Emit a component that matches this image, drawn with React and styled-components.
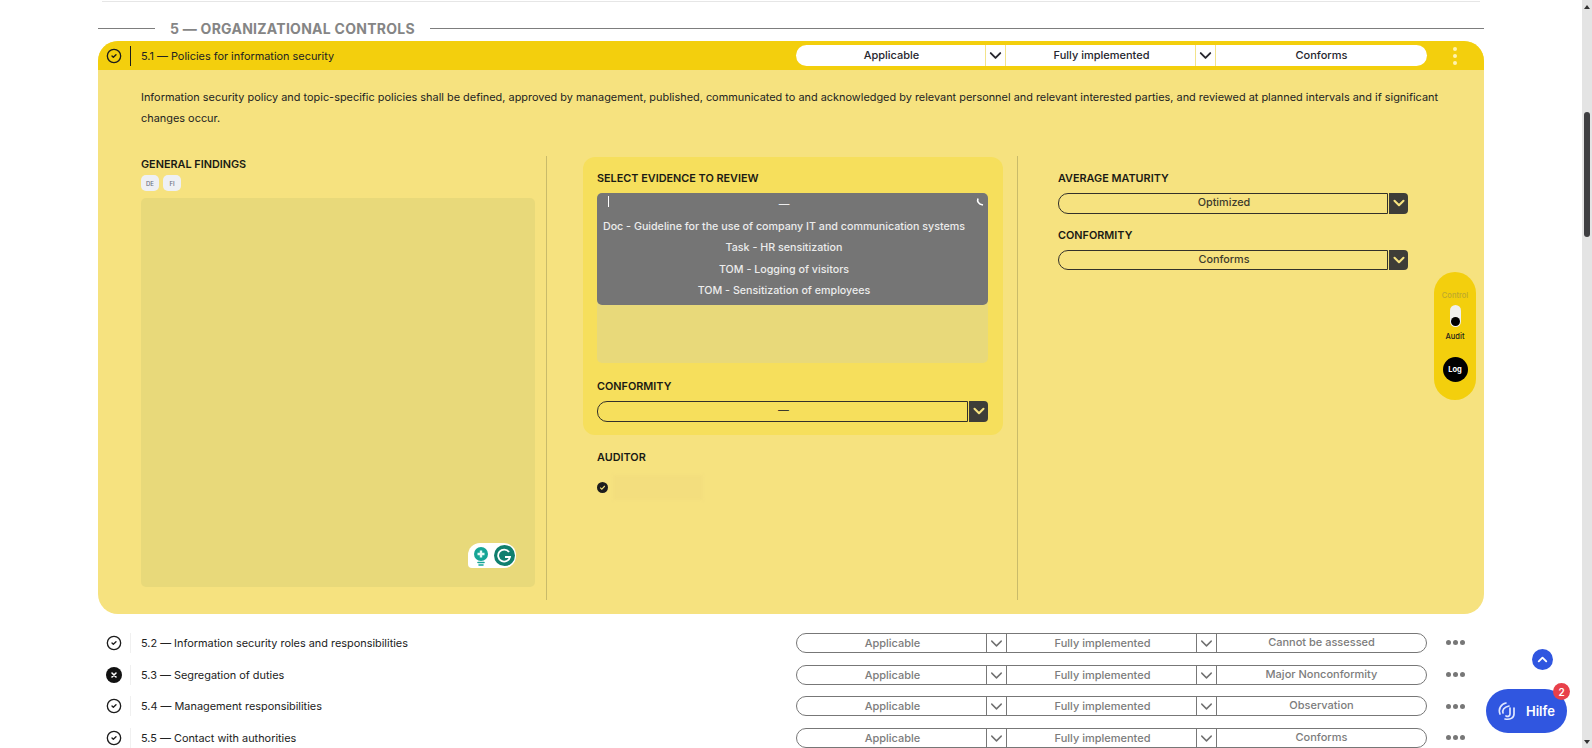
import React from 'react';
import styled, { createGlobalStyle } from 'styled-components';
import { CircleCheck, ChevronDown, ChevronUp } from 'lucide-react';

const GlobalStyle = createGlobalStyle`
  html, body {
    margin: 0;
    padding: 0;
    background: #fff;
    font-family: Inter, "Liberation Sans", sans-serif;
    color: #1c1c1c;
    overflow: hidden;
  }
  * { box-sizing: border-box; }
`;

const Page = styled.div`
  width: 1592px;
  height: 748px;
  display: flex;
  overflow: hidden;
  position: relative;
`;

const Main = styled.main`
  flex: 1;
  min-width: 0;
  padding: 0 98px;
`;

const PrevCardEdge = styled.div`
  height: 2px;
  margin: 0 4px;
  border-bottom: 1px solid #e6e6e6;
`;

const SectionHead = styled.div`
  height: 39px;
  padding-top: 14px;
  display: flex;
  align-items: center;
  gap: 15px;

  &::before, &::after {
    content: '';
    height: 1px;
    background: #7d7d7d;
  }
  &::before { width: 57px; }
  &::after { flex: 1; }
`;

const SectionTitle = styled.h2`
  margin: 0;
  font-size: 14px;
  font-weight: 700;
  color: #858585;
  letter-spacing: 0.26px;
`;

const Card = styled.section`
  background: #f6e27f;
  border-radius: 20px;
  overflow: hidden;
  height: 573px;
`;

const Row = styled.div`
  display: flex;
  align-items: center;
  height: ${props => props.$head ? '29px' : '31.7px'};
  background: ${props => props.$head ? '#f3cf0d' : 'transparent'};
`;

const StatusCell = styled.div`
  width: 33px;
  height: 20px;
  padding-left: 8px;
  display: flex;
  align-items: center;
  border-right: 1px solid ${props => props.$head ? '#1c1c1c' : '#f0f0f0'};
  color: #1c1c1c;
`;

const RowTitle = styled.div`
  flex: 1;
  padding-left: 10px;
  font-size: 10.9px;
  color: #222;
  white-space: nowrap;
`;

const PillGroup = styled.div`
  width: 631px;
  height: ${props => props.$head ? '21px' : '20px'};
  margin-right: -1px;
  display: grid;
  grid-template-columns: 189px 21px 189px 21px 1fr;
  border: ${props => props.$head ? 'none' : '1px solid #777'};
  border-radius: 11px;
  background: #fff;
  font-size: 11px;
  font-weight: 500;
  color: ${props => props.$head ? '#26262e' : '#7c7c7c'};
`;

const PillValue = styled.div`
  display: flex;
  align-items: center;
  justify-content: center;
  padding-left: ${props => props.$last ? '0' : '2px'};
  padding-bottom: ${props => props.$up || 0}px;
`;

const PillArrow = styled.div`
  display: flex;
  align-items: center;
  justify-content: center;
  border-left: 1px solid ${props => props.$head ? '#f3e38a' : '#777'};
  border-right: 1px solid ${props => props.$head ? '#f3e38a' : '#777'};
  color: ${props => props.$head ? '#26262e' : '#6f6f6f'};
`;

const MenuCell = styled.div`
  width: 58px;
  display: flex;
  flex-direction: ${props => props.$head ? 'column' : 'row'};
  align-items: center;
  justify-content: center;
  gap: ${props => props.$head ? '3px' : '2px'};
`;

const MenuDot = styled.span`
  width: ${props => props.$head ? '4px' : '5px'};
  height: ${props => props.$head ? '4px' : '5px'};
  border-radius: 50%;
  background: ${props => props.$head ? '#fff3b0' : '#777'};
`;

const CardBody = styled.div`
  padding: 17px 0 0 43px;
`;

const Description = styled.p`
  margin: 0;
  width: 1310px;
  font-size: 10.92px;
  line-height: 21px;
  color: #222;
`;

const Columns = styled.div`
  margin-top: 27px;
  height: 444px;
  display: grid;
  grid-template-columns: 406px 471px 1fr;
`;

const Column = styled.div`
  padding: ${props => props.$pad || '0'};
  border-right: ${props => props.$divided ? '1px solid #c9bb6a' : 'none'};
  position: relative;
`;

const Label = styled.div`
  height: 16px;
  line-height: 16px;
  font-size: 10.85px;
  font-weight: 600;
  color: #1a1a14;
`;

const PanelLabel = styled(Label)`
  margin-top: 15px;
`;

const SecondLabel = styled(Label)`
  margin-top: 13px;
`;

const LangTags = styled.div`
  display: flex;
  gap: 4px;
  margin-top: 3px;
`;

const LangTag = styled.span`
  width: 18px;
  height: 16px;
  border-radius: 5px;
  background: #eef0f4;
  color: #6d7280;
  font-size: 6px;
  font-weight: 500;
  display: flex;
  align-items: center;
  justify-content: center;
`;

const FindingsBox = styled.div`
  margin-top: 7px;
  width: 394px;
  height: 389px;
  border-radius: 5px;
  background: #e8d97a;
  position: relative;
`;

const GrammarlyBadge = styled.div`
  position: absolute;
  right: 19px;
  bottom: 19px;
  width: 48px;
  height: 25px;
  border-radius: 12px 12px 12px 4px;
  background: #fff;
  display: flex;
  align-items: center;
  justify-content: space-between;
  padding: 0 1px 0 5px;
`;

const EvidencePanel = styled.div`
  background: #f6df5c;
  border-radius: 12px;
  padding: 13px 15px 13px 14px;
  height: 278px;
  margin-top: 1px;
`;

const EvidenceBox = styled.div`
  margin-top: 7px;
  height: 170px;
  border-radius: 5px;
  background: #e8d97a;
`;

const EvidenceList = styled.div`
  height: 112px;
  border-radius: 5px;
  background: #757575;
  padding-right: 17px;
  position: relative;
  color: #ececec;
  font-size: 10.7px;
  font-weight: 500;
`;

const EvidenceOption = styled.div`
  height: ${props => props.$first ? '22.5px' : '21.5px'};
  display: flex;
  align-items: center;
  justify-content: center;
  white-space: nowrap;
`;

const Caret = styled.span`
  position: absolute;
  left: 11px;
  top: 3px;
  width: 1px;
  height: 11px;
  background: #fff;
`;

const CornerMark = styled.svg`
  position: absolute;
  right: 4px;
  top: 5px;
`;

const Select = styled.div`
  margin-top: 7px;
  height: 20.5px;
  display: flex;
  gap: 1px;
`;

const SelectValue = styled.div`
  flex: 1;
  border: 1px solid #33312a;
  border-radius: 10px 0 0 10px;
  padding: 0 0 1px 2px;
  display: flex;
  align-items: center;
  justify-content: center;
  font-size: 10.8px;
  font-weight: 500;
  color: #3c3a2c;
`;

const SelectArrow = styled.div`
  width: 19px;
  border-radius: 0 4px 4px 0;
  background: #3e3d38;
  color: #f6e27f;
  display: flex;
  align-items: center;
  justify-content: center;
`;

const AuditorSection = styled.div`
  margin: 14px 0 0 14px;
`;

const AuditorRow = styled.div`
  margin-top: 10px;
  display: flex;
  align-items: center;
  gap: 5px;
`;

const BlurredName = styled.div`
  width: 90px;
  height: 25px;
  background: #f3de7e;
  filter: blur(1.5px);
`;

const MaturityColumn = styled.div`
  width: 350px;
  display: flex;
  flex-direction: column;
`;

const SideWidget = styled.aside`
  position: absolute;
  left: 1434px;
  top: 272px;
  width: 42px;
  height: 128px;
  border-radius: 21px;
  background: #f3cf0d;
  display: flex;
  flex-direction: column;
  align-items: center;
  padding-top: 19px;
`;

const WidgetText = styled.span`
  font-size: 7.5px;
  line-height: 10px;
  font-weight: 500;
  color: ${props => props.$muted ? '#bda92c' : '#1c1c1c'};
`;

const WidgetToggle = styled.div`
  margin: 4px 0 5px;
  width: 11px;
  height: 22px;
  border-radius: 6px;
  background: #f0f0ee;
  display: flex;
  align-items: flex-end;
  justify-content: center;
  padding-bottom: 1px;

  &::after {
    content: '';
    width: 9px;
    height: 9px;
    border-radius: 50%;
    background: #000;
  }
`;

const LogButton = styled.div`
  margin-top: 15px;
  width: 25px;
  height: 25px;
  border-radius: 50%;
  background: #000;
  color: #fff;
  font-size: 7.5px;
  font-weight: 700;
  display: flex;
  align-items: center;
  justify-content: center;
`;

const ListRows = styled.div`
  margin-top: 13px;
`;

const ScrollUp = styled.button`
  position: absolute;
  left: 1532px;
  top: 649px;
  width: 21px;
  height: 21px;
  padding: 0;
  border: none;
  border-radius: 50%;
  background: #3056e0;
  color: #fff;
  display: flex;
  align-items: center;
  justify-content: center;
`;

const HelpButton = styled.button`
  position: absolute;
  left: 1486px;
  top: 689px;
  width: 81px;
  height: 44px;
  padding: 0 0 0 11px;
  border: none;
  border-radius: 22px;
  background: #3056e0;
  color: #fff;
  font-family: inherit;
  font-size: 13px;
  font-weight: 600;
  display: flex;
  align-items: center;
  gap: 9px;
`;

const HelpBadge = styled.span`
  position: absolute;
  right: -3px;
  top: -6px;
  width: 17px;
  height: 17px;
  border-radius: 50%;
  background: #e8404a;
  color: #fff;
  font-size: 10px;
  font-weight: 600;
  display: flex;
  align-items: center;
  justify-content: center;
`;

const Scrollbar = styled.div`
  width: 10px;
  height: 100%;
  background: #e4e4e4;
  display: flex;
  flex-direction: column;
  align-items: center;
  justify-content: space-between;
  padding: 5px 0 4px;
  position: relative;
`;

const ScrollArrow = styled.span`
  width: 0;
  height: 0;
  border-left: 3.5px solid transparent;
  border-right: 3.5px solid transparent;
  ${props => props.$down
    ? 'border-top: 4px solid #333;'
    : 'border-bottom: 4px solid #333;'}
`;

const ScrollThumb = styled.span`
  position: absolute;
  left: 2px;
  top: 112px;
  width: 6px;
  height: 125px;
  border-radius: 3px;
  background: #3f3f42;
`;

const rows = [
  { title: '5.2 — Information security roles and responsibilities', result: 'Cannot be assessed' },
  { title: '5.3 — Segregation of duties', result: 'Major Nonconformity', failed: true },
  { title: '5.4 — Management responsibilities', result: 'Observation' },
  { title: '5.5 — Contact with authorities', result: 'Conforms' },
];

const evidence = [
  'Doc - Guideline for the use of company IT and communication systems',
  'Task - HR sensitization',
  'TOM - Logging of visitors',
  'TOM - Sensitization of employees',
];

function FailedIcon() {
  return (
    <svg width="16" height="16" viewBox="0 0 16 16">
      <circle cx="8" cy="8" r="8" fill="#111" />
      <path d="M6 6l4 4M10 6l-4 4" stroke="#fff" strokeWidth="1.6" strokeLinecap="round" />
    </svg>
  );
}

function ControlPills({ head, result }) {
  return (
    <PillGroup $head={head}>
      <PillValue $up={1}>Applicable</PillValue>
      <PillArrow $head={head}><ChevronDown size={19} strokeWidth={head ? 2.4 : 1.8} /></PillArrow>
      <PillValue $up={1}>Fully implemented</PillValue>
      <PillArrow $head={head}><ChevronDown size={19} strokeWidth={head ? 2.4 : 1.8} /></PillArrow>
      <PillValue $last $up={head ? 1 : 3}>{result}</PillValue>
    </PillGroup>
  );
}

function DarkSelect({ value }) {
  return (
    <Select>
      <SelectValue>{value}</SelectValue>
      <SelectArrow><ChevronDown size={18} strokeWidth={2.8} /></SelectArrow>
    </Select>
  );
}

function GrammarlyIcons() {
  return (
    <GrammarlyBadge>
      <svg width="16" height="20" viewBox="0 0 16 20">
        <circle cx="8" cy="8" r="7" fill="#15a596" />
        <path d="M8 4.5v7M4.5 8h7" stroke="#e8fbf7" strokeWidth="2.4" />
        <path d="M5 16.5h6M6 19h4" stroke="#15a596" strokeWidth="1.6" strokeLinecap="round" />
      </svg>
      <svg width="21" height="21" viewBox="0 0 21 21">
        <circle cx="10.5" cy="10.5" r="10.5" fill="#0f7f6e" />
        <path d="M15 7a6 6 0 1 0 1 5h-5" fill="none" stroke="#fff" strokeWidth="1.8" />
      </svg>
    </GrammarlyBadge>
  );
}

function HelpLogo() {
  return (
    <svg width="20" height="20" viewBox="0 0 20 20" fill="none" stroke="#dfe6ff" strokeWidth="1.7" strokeLinecap="round">
      <path d="M3 13C1 8 4 3 9 2" />
      <path d="M6 12c-1-3 1-6 6-7" />
      <path d="M13 7v6c0 2-2 3-4 2" />
      <path d="M17 7v6c0 4-4 6-9 5" />
    </svg>
  );
}

export default function App() {
  return (
    <>
      <GlobalStyle />
      <Page>
        <Main>
          <PrevCardEdge />
          <SectionHead>
            <SectionTitle>5 — ORGANIZATIONAL CONTROLS</SectionTitle>
          </SectionHead>

          <Card>
            <Row $head>
              <StatusCell $head><CircleCheck size={16} strokeWidth={2} /></StatusCell>
              <RowTitle>5.1 — Policies for information security</RowTitle>
              <ControlPills head result="Conforms" />
              <MenuCell $head><MenuDot $head /><MenuDot $head /><MenuDot $head /></MenuCell>
            </Row>
            <CardBody>
              <Description>
                Information security policy and topic-specific policies shall be defined, approved by management, published, communicated to and acknowledged by relevant personnel and relevant interested parties, and reviewed at planned intervals and if significant changes occur.
              </Description>
              <Columns>
                <Column $divided>
                  <Label>GENERAL FINDINGS</Label>
                  <LangTags>
                    <LangTag>DE</LangTag>
                    <LangTag>FI</LangTag>
                  </LangTags>
                  <FindingsBox>
                    <GrammarlyIcons />
                  </FindingsBox>
                </Column>

                <Column $divided $pad="0 14px 0 36px">
                  <EvidencePanel>
                    <Label>SELECT EVIDENCE TO REVIEW</Label>
                    <EvidenceBox>
                      <EvidenceList>
                        <Caret />
                        <CornerMark width="9" height="9" viewBox="0 0 9 9">
                          <path d="M3 0.5C2 3 3 6 8 7" fill="none" stroke="#fff" strokeWidth="1.6" />
                        </CornerMark>
                        <EvidenceOption $first>—</EvidenceOption>
                        {evidence.map(item => (
                          <EvidenceOption key={item}>{item}</EvidenceOption>
                        ))}
                      </EvidenceList>
                    </EvidenceBox>
                    <PanelLabel>CONFORMITY</PanelLabel>
                    <DarkSelect value="—" />
                  </EvidencePanel>
                  <AuditorSection>
                    <Label>AUDITOR</Label>
                    <AuditorRow>
                      <svg width="11" height="11" viewBox="0 0 11 11">
                        <circle cx="5.5" cy="5.5" r="5.5" fill="#1d1d1d" />
                        <path d="M3.2 5.7l1.6 1.5 3-3.2" fill="none" stroke="#f6e27f" strokeWidth="1.1" />
                      </svg>
                      <BlurredName />
                    </AuditorRow>
                  </AuditorSection>
                </Column>

                <Column $pad="14px 0 0 40px">
                  <MaturityColumn>
                    <Label>AVERAGE MATURITY</Label>
                    <DarkSelect value="Optimized" />
                    <SecondLabel>CONFORMITY</SecondLabel>
                    <DarkSelect value="Conforms" />
                  </MaturityColumn>
                </Column>
              </Columns>
            </CardBody>
          </Card>

          <ListRows>
            {rows.map(row => (
              <Row key={row.title}>
                <StatusCell>
                  {row.failed ? <FailedIcon /> : <CircleCheck size={16} strokeWidth={2} />}
                </StatusCell>
                <RowTitle>{row.title}</RowTitle>
                <ControlPills result={row.result} />
                <MenuCell><MenuDot /><MenuDot /><MenuDot /></MenuCell>
              </Row>
            ))}
          </ListRows>
        </Main>

        <Scrollbar>
          <ScrollArrow />
          <ScrollThumb />
          <ScrollArrow $down />
        </Scrollbar>

        <SideWidget>
          <WidgetText $muted>Control</WidgetText>
          <WidgetToggle />
          <WidgetText>Audit</WidgetText>
          <LogButton>Log</LogButton>
        </SideWidget>

        <ScrollUp><ChevronUp size={15} strokeWidth={3} /></ScrollUp>
        <HelpButton>
          <HelpLogo />
          Hilfe
          <HelpBadge>2</HelpBadge>
        </HelpButton>
      </Page>
    </>
  );
}
